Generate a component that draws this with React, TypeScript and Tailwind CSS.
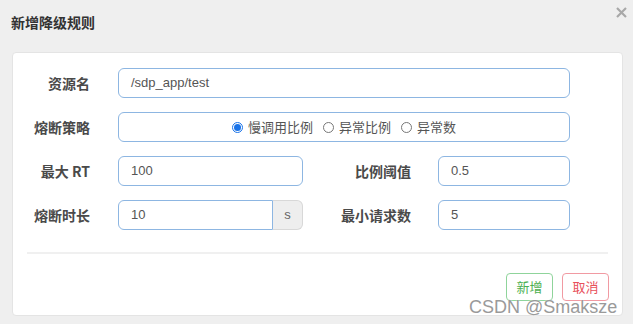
import React from "react";

const cjk = { fontFamily: '"Noto Sans CJK SC", "Liberation Sans", sans-serif' };
const latin = { fontFamily: '"Liberation Sans", "Noto Sans CJK SC", sans-serif' };

const Label: React.FC<{ text: string; w: string }> = ({ text, w }) => (
  <label
    className={`${w} shrink-0 text-right text-[14px] font-bold text-[#4a4a4a]`}
    style={cjk}
  >
    {text}
  </label>
);

const Field: React.FC<{ value: string; w: string }> = ({ value, w }) => (
  <div
    className={`${w} h-[30px] flex items-center rounded-[6px] border border-[#8db6e2] bg-white px-3 text-[13px] text-[#555]`}
    style={latin}
  >
    {value}
  </div>
);

const Radio: React.FC<{ label: string; checked?: boolean }> = ({ label, checked }) => (
  <span className="flex items-center gap-[5px]">
    {checked ? (
      <span className="w-[11px] h-[11px] rounded-full border border-[#1a73e8] flex items-center justify-center">
        <span className="w-[7px] h-[7px] rounded-full bg-[#1a73e8]" />
      </span>
    ) : (
      <span className="w-[11px] h-[11px] rounded-full border border-[#777] bg-white" />
    )}
    <span className="text-[13px] text-[#555]" style={cjk}>
      {label}
    </span>
  </span>
);

export default function App() {
  return (
    <div className="relative w-[633px] h-[324px] bg-[#efefef] overflow-hidden">
      <div className="flex items-start justify-between h-[52px] pl-[11px] pr-[6px] pt-[12px]">
        <h3 className="text-[14px] leading-[20px] font-bold text-[#333]" style={cjk}>
          新增降级规则
        </h3>
        <svg width="11" height="11" viewBox="0 0 11 11" className="-mt-[5px]">
          <path d="M1 1 L10 10 M10 1 L1 10" stroke="#a8a8a8" strokeWidth="2.2" />
        </svg>
      </div>

      <div className="ml-[12px] w-[611px] h-[264px] bg-white rounded-[4px] border border-[#e4e4e4] pt-[15px]">
        <div className="flex flex-col gap-[14px]">
          <div className="flex items-center">
            <Label text="资源名" w="w-[77px]" />
            <div className="w-[28px]" />
            <Field value="/sdp_app/test" w="w-[452px]" />
          </div>

          <div className="flex items-center">
            <Label text="熔断策略" w="w-[77px]" />
            <div className="w-[28px]" />
            <div className="w-[452px] h-[30px] flex items-center justify-center gap-[10px] rounded-[6px] border border-[#8db6e2]">
              <Radio label="慢调用比例" checked />
              <Radio label="异常比例" />
              <Radio label="异常数" />
            </div>
          </div>

          <div className="flex items-center">
            <Label text="最大 RT" w="w-[77px]" />
            <div className="w-[28px]" />
            <Field value="100" w="w-[185px]" />
            <Label text="比例阈值" w="w-[108px]" />
            <div className="w-[27px]" />
            <Field value="0.5" w="w-[132px]" />
          </div>

          <div className="flex items-center">
            <Label text="熔断时长" w="w-[77px]" />
            <div className="w-[28px]" />
            <div className="w-[185px] h-[30px] flex">
              <div
                className="flex-1 flex items-center rounded-l-[6px] border border-[#8db6e2] px-3 text-[13px] text-[#555]"
                style={latin}
              >
                10
              </div>
              <div
                className="w-[30px] flex items-center justify-center rounded-r-[6px] border border-l-0 border-[#d8d8d8] bg-[#eeeeee] text-[13px] text-[#666]"
                style={latin}
              >
                s
              </div>
            </div>
            <Label text="最小请求数" w="w-[108px]" />
            <div className="w-[27px]" />
            <Field value="5" w="w-[132px]" />
          </div>
        </div>

        <div className="mx-[14px] mt-[22px] h-[2px] bg-[#f0f0f0]" />

        <div className="flex justify-end gap-[9px] mr-[13px] mt-[19px]">
          <button
            className="w-[47px] h-[28px] rounded-[4px] border border-[#8fd49b] bg-white text-[13px] text-[#4caf50]"
            style={cjk}
          >
            新增
          </button>
          <button
            className="w-[47px] h-[28px] rounded-[4px] border border-[#f19aa2] bg-white text-[13px] text-[#e8505b]"
            style={cjk}
          >
            取消
          </button>
        </div>
      </div>

      <div
        className="absolute left-[469px] top-[296px] text-[18px] leading-[22px] text-[#9a9a9a] [text-shadow:0_0_2px_#fff]"
        style={latin}
      >
        CSDN @Smaksze
      </div>
    </div>
  );
}
